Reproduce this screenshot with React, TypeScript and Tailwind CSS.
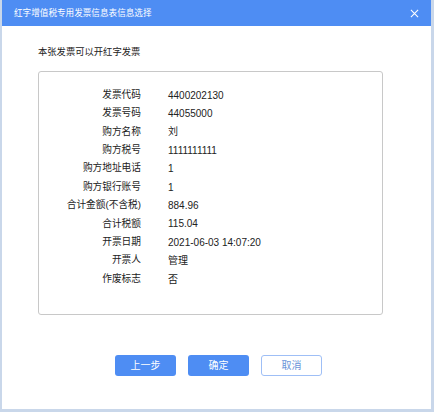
import React from 'react';

interface Row {
  label: string;
  value: string;
}

const rows: Row[] = [
  { label: '发票代码', value: '4400202130' },
  { label: '发票号码', value: '44055000' },
  { label: '购方名称', value: '刘' },
  { label: '购方税号', value: '1111111111' },
  { label: '购方地址电话', value: '1' },
  { label: '购方银行账号', value: '1' },
  { label: '合计金额(不含税)', value: '884.96' },
  { label: '合计税额', value: '115.04' },
  { label: '开票日期', value: '2021-06-03 14:07:20' },
  { label: '开票人', value: '管理' },
  { label: '作废标志', value: '否' },
];

const App: React.FC = () => {
  return (
    <div
      className="w-[434px] h-[412px] bg-[#c9d7ea] pl-[2px] overflow-hidden"
      style={{ fontFamily: '"Liberation Sans", "Noto Sans CJK SC", sans-serif' }}
    >
      <div className="w-[429px] h-[409px] bg-white flex flex-col">
        <div className="h-[26px] bg-[#4e8df3] flex items-center justify-between pl-[12px] pr-[12px]">
          <span className="text-[8.6px] text-white">红字增值税专用发票信息表信息选择</span>
          <svg width="9" height="9" viewBox="0 0 10 10" className="text-white">
            <path d="M1 1L9 9M9 1L1 9" stroke="currentColor" strokeWidth="1.2" />
          </svg>
        </div>

        <div className="pt-[19px] pl-[36px] pr-[48px]">
          <div className="text-[9.3px] leading-[14px] text-[#222]">本张发票可以开红字发票</div>

          <div className="mt-[12px] h-[244px] border border-[#c8c8c8] rounded-[3px] pt-[14px]">
            {rows.map((row) => (
              <div key={row.label} className="flex items-center h-[18.4px] text-[10px] text-[#222]">
                <div className="w-[102px] text-right text-[9.7px]">{row.label}</div>
                <div className="ml-[27px]">{row.value}</div>
              </div>
            ))}
          </div>
        </div>

        <div className="flex gap-[12px] pl-[113px] mt-[40px]">
          <button className="w-[61px] h-[21px] rounded-[3px] bg-[#4e8df3] text-white text-[10px]">上一步</button>
          <button className="w-[61px] h-[21px] rounded-[3px] bg-[#4e8df3] text-white text-[10px]">确定</button>
          <button className="w-[61px] h-[21px] rounded-[3px] bg-white border border-[#9fbff6] text-[#6a93d8] text-[10px]">
            取消
          </button>
        </div>
      </div>
    </div>
  );
};

export default App;
